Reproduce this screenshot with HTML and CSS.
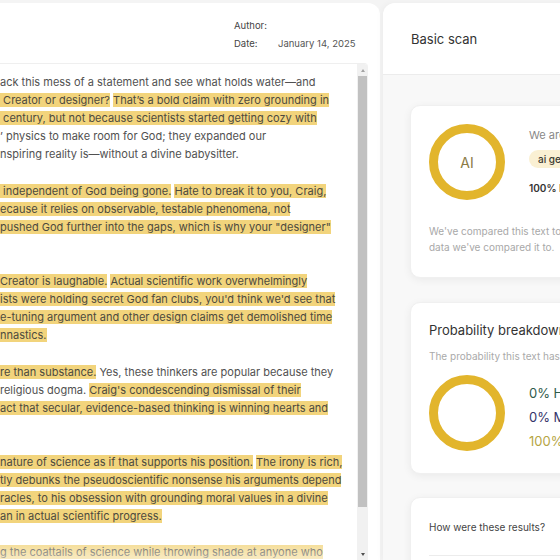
FILE: index.html
```html
<!DOCTYPE html>
<html lang="en">
<head>
<meta charset="utf-8">
<title>Scan result</title>
<link rel="stylesheet" href="styles.css">
</head>
<body>
<div class="app">
  <section class="doc">
    <header class="doc-head">
      <dl class="meta">
        <div class="meta-row"><dt>Author:</dt><dd></dd></div>
        <div class="meta-row"><dt>Date:</dt><dd>January 14, 2025</dd></div>
      </dl>
    </header>
    <div class="doc-body">
      <div class="text">
        <div class="ln">ack this mess of a statement and see what holds water—and</div>
        <div class="ln"><span class="hl"> Creator or designer?</span> <span class="hl">That’s a bold claim with zero grounding in</span></div>
        <div class="ln"><span class="hl"> century, but not because scientists started getting cozy with</span></div>
        <div class="ln">’ physics to make room for God; they expanded our</div>
        <div class="ln">nspiring reality is—without a divine babysitter.</div>
        <div class="ln"></div>
        <div class="ln"><span class="hl"> independent of God being gone.</span> <span class="hl">Hate to break it to you, Craig,</span></div>
        <div class="ln"><span class="hl">ecause it relies on observable, testable phenomena, not</span></div>
        <div class="ln"><span class="hl">pushed God further into the gaps, which is why your "designer"</span></div>
        <div class="ln"></div>
        <div class="ln"></div>
        <div class="ln"><span class="hl">Creator is laughable.</span> <span class="hl">Actual scientific work overwhelmingly</span></div>
        <div class="ln"><span class="hl">ists were holding secret God fan clubs, you'd think we'd see that</span></div>
        <div class="ln"><span class="hl">e-tuning argument and other design claims get demolished time</span></div>
        <div class="ln"><span class="hl">nnastics.</span></div>
        <div class="ln"></div>
        <div class="ln"><span class="hl">re than substance.</span> Yes, these thinkers are popular because they</div>
        <div class="ln">religious dogma. <span class="hl">Craig's condescending dismissal of their</span></div>
        <div class="ln"><span class="hl">act that secular, evidence-based thinking is winning hearts and</span></div>
        <div class="ln"></div>
        <div class="ln"></div>
        <div class="ln"><span class="hl">nature of science as if that supports his position.</span> <span class="hl">The irony is rich,</span></div>
        <div class="ln"><span class="hl">tly debunks the pseudoscientific nonsense his arguments depend</span></div>
        <div class="ln"><span class="hl">racles, to his obsession with grounding moral values in a divine</span></div>
        <div class="ln"><span class="hl">an in actual scientific progress.</span></div>
        <div class="ln"></div>
        <div class="ln"><span class="hl">g the coattails of science while throwing shade at anyone who</span></div>
      </div>
      <div class="sb">
        <span class="sb-up"></span>
        <span class="sb-thumb"></span>
        <span class="sb-fill"></span>
        <span class="sb-down"></span>
      </div>
    </div>
  </section>

  <aside class="panel">
    <header class="panel-head">Basic scan</header>
    <div class="panel-body">
      <div class="card card-scan">
        <div class="result">
          <div class="donut">
            <svg width="76" height="76" viewBox="0 0 76 76"><circle cx="38" cy="38" r="33.5" fill="none" stroke="#e2b52c" stroke-width="9"/></svg>
            <span class="donut-label">AI</span>
          </div>
          <div class="verdict">
            <p class="v-title">We are highly confident this text was</p>
            <span class="pill">ai generated</span>
            <p class="v-prob">100% Probability AI generated</p>
          </div>
        </div>
        <p class="note">We've compared this text to over a million documents of human and AI<br>data we've compared it to.</p>
      </div>

      <div class="card card-breakdown">
        <h2 class="card-title">Probability breakdown</h2>
        <p class="card-sub">The probability this text has been entirely written by a human, AI, or a mix</p>
        <div class="result">
          <div class="donut">
            <svg width="76" height="76" viewBox="0 0 76 76"><circle cx="38" cy="38" r="33.5" fill="none" stroke="#e2b52c" stroke-width="9"/></svg>
          </div>
          <ul class="legend">
            <li class="human">0% Human</li>
            <li class="mixed">0% Mixed</li>
            <li class="ai">100% AI</li>
          </ul>
        </div>
      </div>

      <div class="card card-small">
        <p class="ask">How were these results?</p>
        <div class="divider"></div>
      </div>
    </div>
  </aside>
</div>
</body>
</html>
```

FILE: styles.css
```css
html, body {
  margin: 0;
  padding: 0;
  height: 100%;
  overflow: hidden;
}
body {
  background: #f4f4f4;
  font-family: Inter, "Noto Sans", "Liberation Sans", sans-serif;
  color: #333;
}
.app {
  display: flex;
  gap: 3px;
  padding-top: 3px;
  height: 557px;
}

/* ---------- document card ---------- */
.doc {
  width: 380px;
  flex: none;
  background: #fff;
  border-radius: 0 12px 0 0;
  display: flex;
  flex-direction: column;
  overflow: hidden;
}
.doc-head {
  height: 60px;
  flex: none;
  display: flex;
  justify-content: flex-start;
  padding-left: 234px;
  box-sizing: border-box;
}
.meta {
  margin: 0;
  padding-top: 13px;
  font-size: 9.5px;
  color: #444;
}
.meta-row {
  display: flex;
  height: 18px;
  align-items: center;
}
.meta dt {
  width: 44px;
}
.meta dd {
  margin: 0;
  color: #555;
}
.doc-body {
  flex: 1;
  display: flex;
  border-top: 1px solid #efefef;
  margin-right: 12px;
  border-radius: 0 4px 0 0;
  overflow: hidden;
}
.text {
  position: relative;
  flex: 1;
  padding-top: 9px;
  font-size: 11px;
  line-height: 18.1px;
  color: #515151;
}
.text::after {
  content: "";
  position: absolute;
  left: 0;
  right: 0;
  bottom: 0;
  height: 22px;
  background: linear-gradient(rgba(255,255,255,0.1), rgba(255,255,255,0.55));
}
.ln {
  height: 18.1px;
  white-space: pre;
}
.hl {
  background: #f2d47c;
  color: #4d4a3e;
}
.sb {
  width: 11px;
  flex: none;
  background: #f1f1f1;
  display: flex;
  flex-direction: column;
  align-items: center;
}
.sb-up, .sb-down {
  width: 0;
  height: 0;
  border-left: 2.5px solid transparent;
  border-right: 2.5px solid transparent;
}
.sb-up {
  border-bottom: 3px solid #a3a3a3;
  margin: 5px 0 4px;
}
.sb-down {
  border-top: 3px solid #505050;
  margin: 0 0 4px;
}
.sb-thumb {
  width: 9px;
  height: 431px;
  background: #c1c1c1;
}
.sb-fill {
  flex: 1;
}

/* ---------- right panel ---------- */
.panel {
  width: 330px;
  flex: none;
  background: #f8f8f8;
  border-radius: 12px 0 0 0;
  display: flex;
  flex-direction: column;
  box-shadow: -2px 0 6px rgba(0,0,0,0.03);
}
.panel-head {
  height: 72px;
  flex: none;
  box-sizing: border-box;
  background: #fff;
  border-radius: 12px 0 0 0;
  border-bottom: 1px solid #ececec;
  padding: 28px 0 0 28px;
  font-size: 13px;
  line-height: 16px;
  color: #333;
}
.panel-body {
  padding: 30px 0 0 27px;
  display: flex;
  flex-direction: column;
}
.card {
  background: #fff;
  border: 1px solid #f0f0f0;
  border-radius: 10px;
  box-shadow: 0 2px 8px rgba(0,0,0,0.06);
  padding: 18px 18px 22px;
}
.card-breakdown {
  margin-top: 24px;
  padding-bottom: 20px;
}
.result {
  display: flex;
  align-items: flex-start;
  gap: 24px;
}
.donut {
  position: relative;
  width: 76px;
  height: 76px;
  flex: none;
}
.donut svg {
  display: block;
}
.donut-label {
  position: absolute;
  inset: 0;
  display: flex;
  align-items: center;
  justify-content: center;
  font-size: 14px;
  color: #8a7b45;
}
.verdict {
  padding-top: 3px;
  white-space: nowrap;
}
.v-title {
  margin: 0;
  font-size: 11px;
  line-height: 16px;
  color: #888;
}
.pill {
  display: inline-block;
  margin-top: 7px;
  height: 18px;
  line-height: 18px;
  padding: 0 9px;
  border-radius: 9px;
  background: #faf0d3;
  font-size: 10px;
  font-weight: 500;
  color: #3b3a30;
}
.v-prob {
  margin: 13px 0 0;
  font-size: 10px;
  line-height: 14px;
  font-weight: 600;
  color: #333;
}
.note {
  margin: 23px 0 0;
  font-size: 10px;
  line-height: 16px;
  color: #a8a8a8;
  white-space: nowrap;
}
.card-title {
  margin: 1px 0 0;
  font-size: 13px;
  line-height: 16px;
  font-weight: 400;
  color: #333;
}
.card-sub {
  margin: 11px 0 12px;
  font-size: 10px;
  line-height: 14px;
  color: #aaa;
  white-space: nowrap;
}
.legend {
  list-style: none;
  margin: 0;
  padding: 6px 0 0;
  font-size: 13px;
  line-height: 24px;
  white-space: nowrap;
}
.human { color: #2f5b4b; }
.mixed { color: #34346a; }
.ai { color: #b6a544; }
.card-small {
  margin-top: 23px;
  padding: 22px 18px 0;
  height: 80px;
}
.ask {
  margin: 0;
  font-size: 10px;
  line-height: 14px;
  color: #444;
}
.divider {
  margin-top: 21px;
  border-top: 1px solid #ececec;
}
```
